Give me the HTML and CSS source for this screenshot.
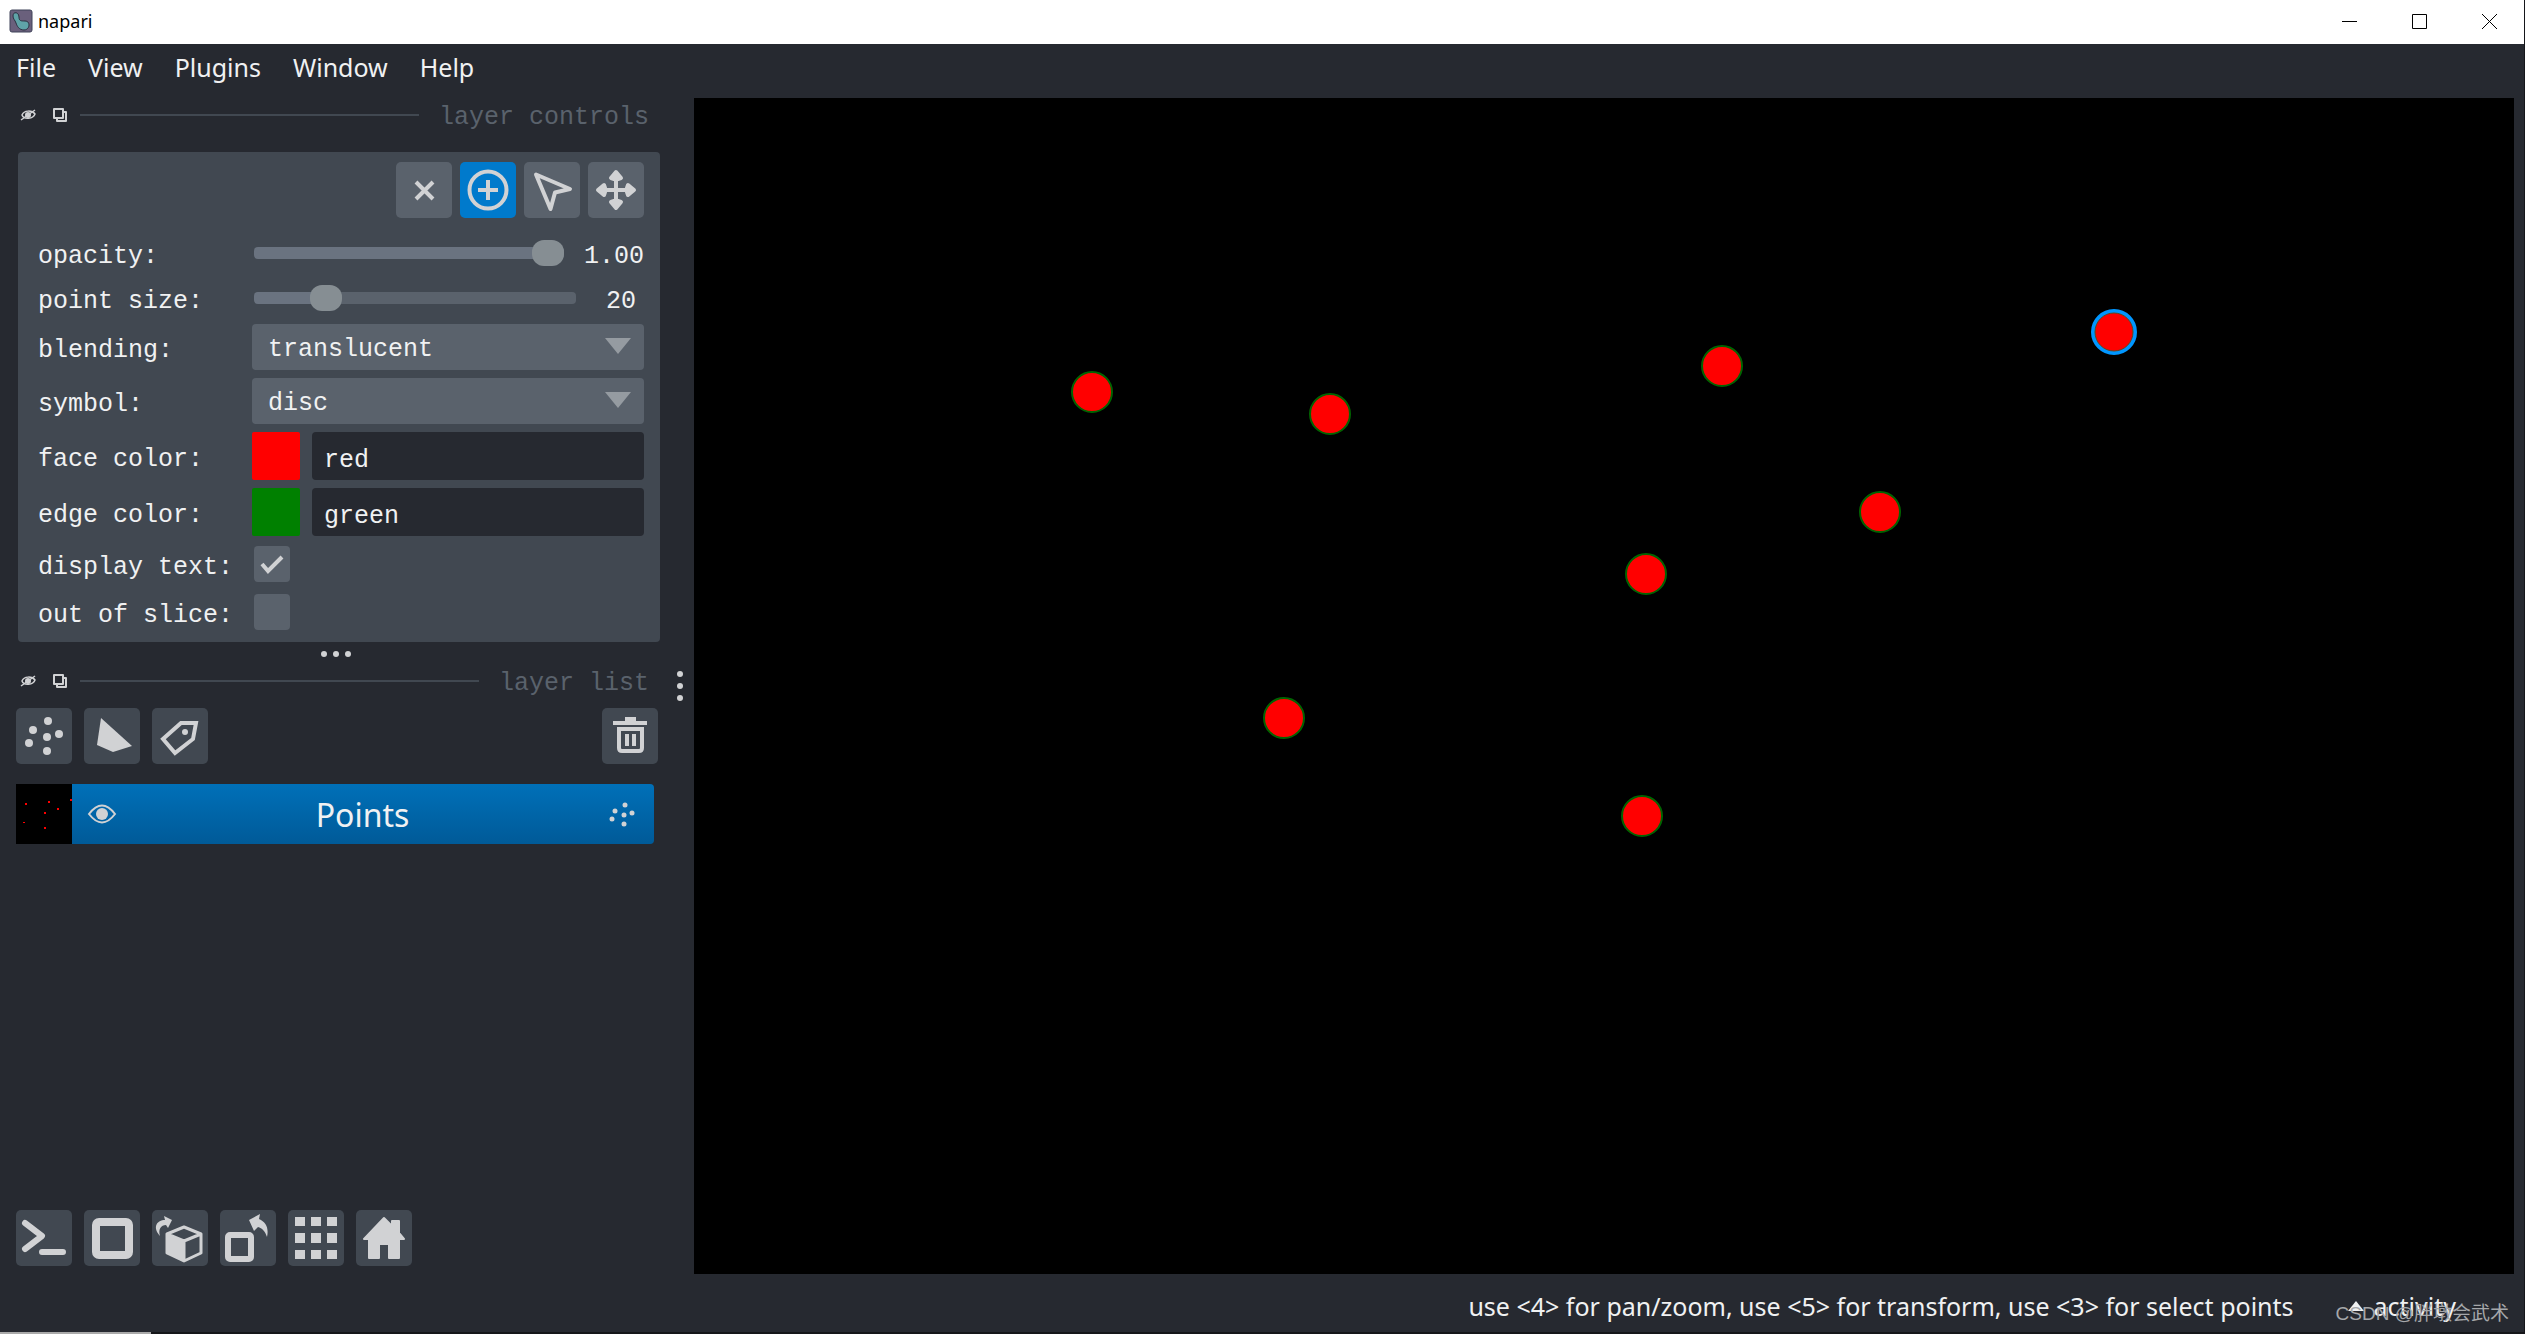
FILE: index.html
```html
<!DOCTYPE html>
<html lang="en">
<head>
<meta charset="utf-8">
<title>napari</title>
<link rel="stylesheet" href="styles.css">
</head>
<body>
<div class="window">
  <header class="titlebar">
    <svg class="app-icon" width="24" height="24" viewBox="0 0 24 24"><rect x="1" y="1" width="22" height="22" rx="2" fill="#6a607c" stroke="#3f4259"/><path d="M4 7C4 2 10 3 10 8c0 4 2 4 6 4 6 0 5 9-1 9-5 0-7-4-8-7C6 11 4 10 4 7z" fill="#5fa3a8" stroke="#2b3040"/></svg>
    <span class="app-name">napari</span>
    <div class="window-buttons">
      <button class="window-button" aria-label="Minimize"><svg width="15" height="15"><path d="M0 7.5h15" stroke="#000"/></svg></button>
      <button class="window-button" aria-label="Maximize"><svg width="15" height="15"><path d="M.5.5h14v14h-14z" fill="none" stroke="#000"/></svg></button>
      <button class="window-button" aria-label="Close"><svg width="15" height="15"><path d="M0 0l15 15M15 0L0 15" stroke="#000"/></svg></button>
    </div>
  </header>
  <nav class="menubar">
    <button class="menu">File</button>
    <button class="menu">View</button>
    <button class="menu">Plugins</button>
    <button class="menu">Window</button>
    <button class="menu">Help</button>
  </nav>
  <main class="workspace">
    <aside class="sidebar">
      <div class="dock-title">
        <button class="dock-button" aria-label="Hide panel"><svg width="16" height="16" viewBox="0 0 16 16"><path d="M2 8C4 3 12 3 15 7 13 12 4 13 2 8z" fill="none" stroke="#d1d2d4" stroke-width="1.5"/><circle cx="8" cy="8" r="3" fill="#d1d2d4"/><path d="M1 13L15 3" stroke="#d1d2d4" stroke-width="1.5"/></svg></button>
        <button class="dock-button" aria-label="Float panel"><svg width="16" height="16" viewBox="0 0 16 16"><path d="M2 2h9v9H2zM12 5h2v9H5v-2" fill="none" stroke="#d1d2d4" stroke-width="2" stroke-linejoin="round"/></svg></button>
        <span class="rule"></span>
        <h2 class="dock-name">layer controls</h2>
      </div>
      <section class="controls">
        <div class="modes">
          <button class="tool" aria-label="Delete points"><svg width="56" height="56" viewBox="0 0 56 56"><path d="M20 20l17 17M37 20L20 37" stroke="#d1d2d4" stroke-width="4"/></svg></button>
          <button class="tool active" aria-label="Add points"><svg width="56" height="56" viewBox="0 0 56 56" fill="none" stroke="#d1d2d4" stroke-width="4"><circle cx="28" cy="28" r="18.5"/><path d="M28 18v20M18 28h20"/></svg></button>
          <button class="tool" aria-label="Select points"><svg width="56" height="56" viewBox="0 0 56 56"><path d="M12 12.500L46 27 31 30.500 26.500 47z" fill="none" stroke="#d1d2d4" stroke-width="4" stroke-linejoin="round"/></svg></button>
          <button class="tool" aria-label="Pan and zoom"><svg width="56" height="56" viewBox="0 0 56 56" fill="#d1d2d4" stroke="#d1d2d4" stroke-width="4" stroke-linejoin="round"><path d="M28 12v32M12 28h32M28 10l5 6-3 1h-4l-3-1zM28 46l5-6-3-1h-4l-3 1zM10 28l6-5 1 3v4l-1 3zM46 28l-6-5-1 3v4l1 3z"/></svg></button>
        </div>
        <form class="settings">
          <label for="opacity">opacity:</label>
          <div class="slider-row"><input id="opacity" class="slider full" type="range" min="0" max="1" step="0.01" value="1"><output class="value" for="opacity">1.00</output></div>
          <label for="size">point size:</label>
          <div class="slider-row sized"><input id="size" class="slider partial" type="range" min="1" max="100" value="20"><output class="value" for="size">20</output></div>
          <label for="blending">blending:</label>
          <select id="blending" class="combo"><option>translucent</option></select>
          <label for="symbol">symbol:</label>
          <select id="symbol" class="combo"><option>disc</option></select>
          <label for="face">face color:</label>
          <div class="color-row"><span class="swatch face"></span><input id="face" class="color-name" type="text" value="red"></div>
          <label for="edge">edge color:</label>
          <div class="color-row"><span class="swatch edge"></span><input id="edge" class="color-name" type="text" value="green"></div>
          <label for="text">display text:</label>
          <input id="text" class="check" type="checkbox" checked>
          <label for="slice">out of slice:</label>
          <input id="slice" class="check" type="checkbox">
        </form>
      </section>
      <div class="splitter horizontal"><i></i><i></i><i></i></div>
      <div class="dock-title list-title">
        <button class="dock-button" aria-label="Hide panel"><svg width="16" height="16" viewBox="0 0 16 16"><path d="M2 8C4 3 12 3 15 7 13 12 4 13 2 8z" fill="none" stroke="#d1d2d4" stroke-width="1.5"/><circle cx="8" cy="8" r="3" fill="#d1d2d4"/><path d="M1 13L15 3" stroke="#d1d2d4" stroke-width="1.5"/></svg></button>
        <button class="dock-button" aria-label="Float panel"><svg width="16" height="16" viewBox="0 0 16 16"><path d="M2 2h9v9H2zM12 5h2v9H5v-2" fill="none" stroke="#d1d2d4" stroke-width="2" stroke-linejoin="round"/></svg></button>
        <span class="rule"></span>
        <h2 class="dock-name">layer list</h2>
      </div>
      <div class="toolbar">
        <button class="tool" aria-label="New points layer"><svg width="56" height="56" viewBox="0 0 56 56" fill="#d1d2d4"><circle cx="32" cy="13" r="4"/><circle cx="17" cy="22" r="4"/><circle cx="43" cy="26" r="4"/><circle cx="31" cy="29" r="4"/><circle cx="13" cy="35" r="4"/><circle cx="31" cy="43" r="4"/></svg></button>
        <button class="tool" aria-label="New shapes layer"><svg width="56" height="56" viewBox="0 0 56 56"><path d="M17 10L48 38 29 44 13 37z" fill="#d1d2d4"/></svg></button>
        <button class="tool" aria-label="New labels layer"><svg width="56" height="56" viewBox="0 0 56 56"><path d="M29 15h15l-3 16-18 14L11 31z" fill="none" stroke="#d1d2d4" stroke-width="4"/><circle cx="33" cy="24" r="3" fill="#d1d2d4"/></svg></button>
        <button class="tool trash" aria-label="Delete layer"><svg width="56" height="56" viewBox="0 0 56 56"><path d="M11 13h12V9h11v4h11v4H11z" fill="#d1d2d4"/><path d="M17 21h23v19q0 3-3 3H20q-3 0-3-3zM25 26v12M32 26v12" fill="none" stroke="#d1d2d4" stroke-width="4"/></svg></button>
      </div>
      <div class="layer">
        <svg class="thumb" width="56" height="60" viewBox="0 0 56 60"><path d="M0 0h56v60H0z"/><path d="M9 19h2v2H9zM32 17h2v2h-2zM54 15h2v2h-2zM41 24h2v2h-2zM28 28h2v2h-2zM7 38h2v1H7zM28 43h2v2h-2z" fill="#f00"/></svg>
        <button class="eye" aria-label="Toggle visibility"><svg width="30" height="20" viewBox="0 0 30 20"><path d="M2 10q13-17 26 0-13 17-26 0z" fill="none" stroke="#d1d2d4" stroke-width="2"/><circle cx="15" cy="10" r="6" fill="#d1d2d4"/></svg></button>
        <span class="layer-name">Points</span>
        <svg class="layer-kind" width="28" height="28" viewBox="0 0 28 28" fill="#d1d2d4"><circle cx="17" cy="5" r="2.5"/><circle cx="7" cy="11" r="2.5"/><circle cx="24" cy="13" r="2.5"/><circle cx="16" cy="15" r="2.5"/><circle cx="4" cy="19" r="2.5"/><circle cx="16" cy="24" r="2.5"/></svg>
      </div>
      <div class="toolbar viewer-buttons">
        <button class="tool" aria-label="Console"><svg width="56" height="56" viewBox="0 0 56 56"><path d="M9 13l17 13L9 39M26 42h21" fill="none" stroke="#d1d2d4" stroke-width="6" stroke-linecap="round" stroke-linejoin="round"/></svg></button>
        <button class="tool" aria-label="Toggle 2D and 3D"><svg width="56" height="56" viewBox="0 0 56 56"><rect x="12" y="12" width="33" height="33" rx="3" fill="none" stroke="#d1d2d4" stroke-width="8"/></svg></button>
        <button class="tool" aria-label="Roll dimensions"><svg width="56" height="56" viewBox="0 0 56 56"><path d="M15 24L32 31v21L15 43z" fill="#d1d2d4"/><path d="M32 17l17 7v19L32 51 15 43V24zM15 24l17 7 17-7M32 31v20" fill="none" stroke="#d1d2d4" stroke-width="3" stroke-linejoin="round"/><path d="M8 26C0 17 5 10 13 10l-1-4 8 4-4 8-2-3c-5 0-8 4-6 11z" fill="#d1d2d4"/></svg></button>
        <button class="tool" aria-label="Transpose"><svg width="56" height="56" viewBox="0 0 56 56"><rect x="8" y="25" width="23" height="24" rx="2" fill="none" stroke="#d1d2d4" stroke-width="6"/><path d="M29 10L40 4l-1 5c7 3 10 9 8 18-2-6-5-9-9-10l-4 4z" fill="#d1d2d4"/></svg></button>
        <button class="tool" aria-label="Grid view"><svg width="56" height="56" viewBox="0 0 56 56"><path d="M7 7h10v9H7zM23 7h10v9H23zM39 7h10v9H39zM7 23h10v10H7zM23 23h10v10H23zM39 23h10v10H39zM7 40h10v9H7zM23 40h10v9H23zM39 40h10v9H39z" fill="#d1d2d4"/></svg></button>
        <button class="tool" aria-label="Home"><svg width="56" height="56" viewBox="0 0 56 56"><path d="M28 8l8 8v-5h7v12l5 6h-5v19H33V34H23v14H13V29H8z" fill="#d1d2d4" stroke="#d1d2d4" stroke-width="2" stroke-linejoin="round"/></svg></button>
      </div>
    </aside>
    <div class="splitter vertical"><i></i><i></i><i></i></div>
    <svg class="canvas" viewBox="0 0 1820 1176" preserveAspectRatio="xMinYMin slice" role="img" aria-label="Points viewer">
      <g fill="#f00" stroke="#006400" stroke-width="2">
        <circle cx="398" cy="294" r="20"/><circle cx="636" cy="316" r="20"/><circle cx="1028" cy="268" r="20"/><circle cx="1186" cy="414" r="20"/><circle cx="952" cy="476" r="20"/><circle cx="590" cy="620" r="20"/><circle cx="948" cy="718" r="20"/>
      </g>
      <circle cx="1420" cy="234" r="21" fill="#f00" stroke="#0096ff" stroke-width="4"/>
      <circle cx="1420" cy="234" r="19" fill="none" stroke="#5a4a20"/>
    </svg>
  </main>
  <footer class="statusbar">
    <span class="hint">use &lt;4&gt; for pan/zoom, use &lt;5&gt; for transform, use &lt;3&gt; for select points</span>
    <button class="activity"><svg width="16" height="10" viewBox="0 0 16 10"><path d="M0 10L8 0l8 10z" fill="#f0f1f2"/></svg>activity</button>
    <span class="watermark">CSDN @胖墩会武术</span>
  </footer>
  <div class="desktop-edge"><span class="taskbar"></span></div>
</div>
</body>
</html>
```
FILE: styles.css
```css
* { box-sizing: border-box; }
body { margin: 0; background: #262930; color: #f0f1f2; font-family: "Noto Sans", "Open Sans", sans-serif; font-size: 25px; }
button { padding: 0; border: 0; background: none; color: inherit; font: inherit; }
svg { display: block; }
.window { display: flex; flex-direction: column; min-height: 100vh; border-right: 1px solid #15161a; }
.titlebar { display: flex; align-items: center; height: 44px; padding: 0 0 2px 9px; background: #fff; color: #000; }
.app-name { margin-left: 5px; font-size: 18px; }
.window-buttons { display: flex; margin-left: auto; }
.window-button { display: grid; place-items: center; width: 70px; height: 44px; }
.menubar { display: flex; gap: 32px; height: 54px; padding: 0 16px 8px; align-items: center; }
.workspace { flex: 1; display: flex; min-height: 0; padding-right: 10px; }
.sidebar { display: flex; flex-direction: column; width: 666px; padding: 0 6px 8px 16px; font-family: "Liberation Mono", monospace; }
.dock-title { display: flex; align-items: center; height: 34px; padding: 0 11px 0 4px; margin-bottom: 20px; }
.dock-button { width: 16px; margin-right: 16px; }
.dock-button + .rule { margin-left: -4px; }
.rule { flex: 1; height: 2px; margin-right: 20px; background: #414851; }
.dock-name { margin: 0; padding-top: 6px; color: #5a626c; font-size: 25px; font-weight: 400; line-height: 28px; }
.controls { margin: 0 0 0 2px; width: 642px; padding: 10px 16px 10px 20px; border-radius: 4px; background: #414851; }
.modes { display: flex; justify-content: flex-end; gap: 8px; margin-bottom: 16px; }
.tool { width: 56px; height: 56px; border-radius: 5px; background: #414851; }
.controls .tool { background: #5a626c; }
.controls .tool.active { background: #007acc; }
.settings { display: grid; grid-template-columns: 214px minmax(0, 1fr); grid-template-rows: 38px 36px 46px 46px 48px 48px 40px 40px; row-gap: 8px; align-items: center; line-height: 30px; }
.settings label { padding-top: 8px; }
.slider-row { display: flex; align-items: center; justify-content: space-between; padding-left: 2px; }
.slider { appearance: none; width: 310px; height: 26px; margin: 0; background: none; }
.sized .slider { width: 322px; }
.slider::-webkit-slider-runnable-track { height: 12px; border-radius: 4px; background: #6a7380; }
.partial::-webkit-slider-runnable-track { background: linear-gradient(90deg, #6a7380 24%, #5a626c 24%); }
.slider::-webkit-slider-thumb { appearance: none; width: 32px; height: 26px; margin-top: -7px; border-radius: 12px; background: #868e93; }
.value { padding-top: 8px; }
.sized .value { padding-right: 8px; }
.combo { appearance: none; width: 100%; height: 46px; padding: 6px 16px 0; border: 0; border-radius: 4px; background: #5a626c url("data:image/svg+xml,%3Csvg xmlns='http://www.w3.org/2000/svg' width='26' height='16'%3E%3Cpath d='M0 0h26L13 16z' fill='%23959ba1'/%3E%3C/svg%3E") no-repeat right 13px top 14px; color: inherit; font: inherit; }
.color-row { display: flex; gap: 12px; }
.swatch { width: 48px; height: 48px; border-radius: 2px; }
.face { background: #f00; }
.edge { background: #008000; }
.color-name { flex: 1; min-width: 0; height: 48px; padding: 8px 12px 0; border: 0; border-radius: 4px; background: #262930; color: inherit; font: inherit; }
.check { appearance: none; width: 36px; height: 36px; margin: 0 2px; border-radius: 4px; background: #5a626c; }
.check:checked { background: #5a626c url("data:image/svg+xml,%3Csvg xmlns='http://www.w3.org/2000/svg' width='36' height='36'%3E%3Cpath d='M8 18l6 7L28 11' fill='none' stroke='%23d1d2d4' stroke-width='4'/%3E%3C/svg%3E"); }
.splitter { display: flex; justify-content: center; align-items: center; gap: 6px; }
.splitter i { width: 6px; height: 6px; border-radius: 50%; background: #d1d2d4; }
.horizontal { height: 22px; padding: 2px 4px 0 0; }
.vertical { flex-direction: column; width: 28px; }
.list-title { margin-bottom: 10px; }
.toolbar { display: flex; gap: 12px; }
.trash { margin-left: auto; margin-right: 2px; }
.layer { display: flex; align-items: center; width: 638px; height: 60px; margin-top: 20px; padding-right: 18px; border-radius: 0 4px 4px 0; background: linear-gradient(#0070b8, #005a98); font-family: "Noto Sans", "Open Sans", sans-serif; font-size: 32px; }
.eye { margin-left: 15px; }
.layer-name { flex: 1; text-align: center; }
.viewer-buttons { margin-top: auto; }
.canvas { flex: 1; min-width: 0; background: #000; }
.statusbar { position: relative; display: flex; justify-content: flex-end; align-items: center; height: 58px; padding: 6px 68px 0 0; }
.activity { display: flex; align-items: center; gap: 10px; margin-left: 54px; }
.watermark { position: absolute; right: 15px; top: 28px; color: #a5a7aa; font-family: "Liberation Sans", "Noto Sans CJK SC", sans-serif; font-size: 19px; line-height: 24px; }
.desktop-edge { height: 2px; background: #151619; }
.taskbar { display: block; width: 6%; height: 2px; background: #aaa; }
```
